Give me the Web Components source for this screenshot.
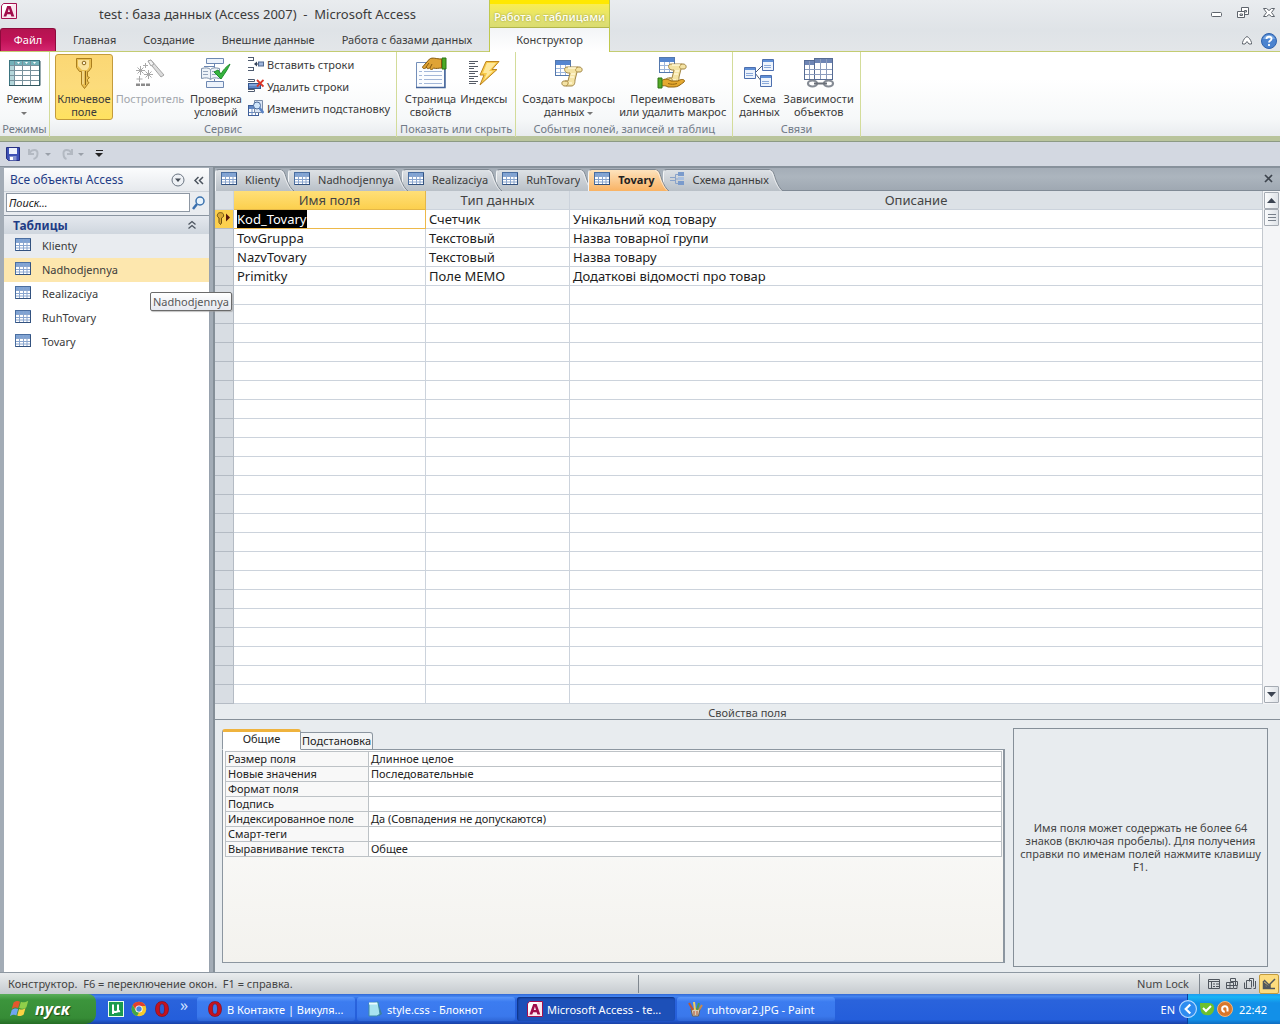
<!DOCTYPE html>
<html lang="ru">
<head>
<meta charset="utf-8">
<title>Microsoft Access</title>
<style>
html,body{margin:0;height:100%}
body{font:11px/13px "Noto Sans","Open Sans",sans-serif;color:#3b3b3b;overflow:hidden}
</style>
</head>
<body>
<access-app></access-app>
<script>
const grid16 = '<rect x=".5" y="1.5" width="15" height="12" fill="#fff" stroke="#4a6ea0"/><rect x="1" y="2" width="14" height="3" fill="#7fa3d4"/><path d="M1 5.5h14M1 8.5h14M1 11h14M4.5 2v11M8.5 2v11M12 2v11" stroke="#8aa6cf" fill="none"/><path d="M1 13.5h15M15.5 2v12" stroke="#33527f" fill="none"/>';
const scroll = '<path d="M14 10h12c4 0 4 5 1 5h-3l-2 8c0 4-1 6-4 6h-6c-4 0-4-5-1-5h4l2-8c-6 1-7-6-3-6z" fill="#f4e3a4" stroke="#a18544"/><path d="M24 15c-2-1-2-4 1-5M12 24c4-1 4 4 1 5" fill="none" stroke="#b3934a"/><path d="M15 11h8M18 17h4M17 20h4M16 26h3" stroke="#fff7d4" stroke-width="1.5" fill="none"/>';
const hand = '<path d="M4 24c4-3 7-2 10 0h7c4-3 8-1 6 1-4 3-6 5-10 5h-6c-3-2-4-1-7-1z" fill="#e5a930" stroke="#92640f"/><path d="M11 26.500c3 1 6 1 9 0" stroke="#92640f" fill="none"/><path d="M1 21h4v10H1z" fill="#56ab26" stroke="#2d7414"/>';
const box = (x,y,w=11,h=11)=>`<path d="M${x+.5} ${y+.5}h${w}v${h}h-${w}z" fill="#eef4fc" stroke="#4d6fae"/><path d="M${x+1} ${y+1}h${w-1}v2h-${w-1}z" fill="#5f8fd6"/><path d="M${x+2} ${y+6.5}h${w-4}M${x+2} ${y+8.5}h${w-4}" stroke="#8aa9da"/>`;
const ICONS = {
 access:[16,'<path d="M2.5.5h13v15H.5V3z" fill="#fbe6ef" stroke="#a3104f"/><path d="M1 12V3l2-2h9z" fill="#fff"/><path d="M2.500 13.500h2.800l.8-2.300h3.500l.8 2.300h2.900L9.600 3H6.200zM6.800 8.900 7.900 5.500 9 8.900z" fill="#a10d4b"/>'],
 table:[16,grid16],
 view:[32,'<rect x=".5" y="3.500" width="30" height="25" fill="#fff" stroke="#3b7480"/><rect x="1" y="4" width="29" height="4" fill="#72b1b9"/><rect x="1" y="8" width="4" height="20" fill="#b4d6da"/><path d="M1 8.500h29M1 13.500h29M1 18.500h29M1 23.500h29M5.500 4v24M13.500 4v24M21.500 4v24" stroke="#77919c" fill="none"/><path d="M8 5h3l-1.500 2zM16 5h3l-1.500 2zM24 5h3l-1.500 2z" fill="#fff"/><path d="M0 28.500h31V4" stroke="#32575f" fill="none"/>'],
 key:[32,'<path d="M8.500 1.500h15v9l-3 4h-1v5l2 1-2 2v2l1.500 1-1.500 2-3 4-3-4v-13h-2l-3-4z" fill="#e9bf52" stroke="#a97d1e"/><path d="M10 3h11v7l-2 3h-5l-4-4z" fill="#f9e19a"/><circle cx="16" cy="6" r="1.800" fill="#fff6d8" stroke="#8a651b"/><path d="M17.500 14v14" stroke="#8d681d"/><path d="M15 14v13" stroke="#fdedb4"/>'],
 builder:[32,'<path d="m14 4 3-1 13 15-3 2z" fill="#dcdcdc" stroke="#a5a5a5"/><path d="m14 4 3-1 3 4-3 2z" fill="#f2f2f2" stroke="#a5a5a5"/><g stroke="#a9a9a9"><path d="M6.500 9v9M2 13.500h9M3.500 10.500l6 6M9.500 10.500l-6 6M14.500 13v9M10 17.500h9M11.500 14.500l6 6M17.500 14.500l-6 6M5.500 19v6M2.500 22h6M11.500 6v5M9 8.500h5"/></g><path d="M2 26.500h4v2.500H2zM7 26.500h4v2.500H7zM12 26.500h4v2.500h-4z" fill="#8b8b8b"/>'],
 check:[32,'<path d="M6.500 1.500h17v5h-17zM6.500 24.500h17v6h-17z" fill="#edf3fb" stroke="#6d88b2"/><path d="M14.500 7v4M14.500 22v3M14 9.500H4" stroke="#6d88b2" fill="none"/><path d="M1.500 11.500c4-1 7-1 9 1 2-2 5-2 9-1v10c-4-1-7-1-9 1-2-2-5-2-9-1z" fill="#eef3f8" stroke="#7b8fa9"/><path d="M10.500 13v9M3 14.500h5M3 17.500h5M12 14.500h5M12 17.500h5" stroke="#94a5bc"/><path d="m14 15 4-2 3 4c2-4 5-7 9-10-2 5-5 9-9 15z" fill="#35b43e" stroke="#1e8c2a"/>'],
 insrow:[16,'<path d="M0 1.500h6M0 4.500h6M5.500 1v4M0 11.500h6M0 14.500h6M5.500 11v4" stroke="#4f5b70" fill="none"/><path d="m6 8 3-2.500v5z" fill="#35425a"/><path d="M8 8h3" stroke="#35425a"/><rect x="10.500" y="6" width="5" height="4" fill="#9fb5db" stroke="#51698f"/>'],
 delrow:[16,'<path d="M0 1.500h6.500v2H0M0 13.500h6.500v-2H0" stroke="#4f5b70" fill="#fff"/><rect x=".5" y="5.500" width="12" height="5" fill="#5b83c4" stroke="#35568d"/><path d="M1 7h11" stroke="#a5c2ec"/><path d="m9 2 6.500 6.500M15.500 2 9 8.500" stroke="#dc3425" stroke-width="1.800"/>'],
 lookup:[16,'<rect x=".5" y="5.500" width="10" height="10" fill="#fff" stroke="#3f5f99"/><path d="M1 6h9v3H1z" fill="#5f86c5"/><path d="M1 12.500h9M4 6v9M7.500 6v9" stroke="#6b8cc0"/><path d="M6.500.5h8v12h-8z" fill="#d9e5f5" stroke="#7a8ca8"/><circle cx="9" cy="5.500" r="3.500" fill="#cfe5fb" stroke="#4d6d9b"/><path d="m11.500 8 4 5" stroke="#5b83c4" stroke-width="2.500"/>'],
 props:[32,'<path d="M1.500 5.500h28v25h-28z" fill="#fbfdff" stroke="#748fb9"/><path d="M1 30.500h29V9" fill="none" stroke="#45669b" stroke-width="1.500"/><path d="M4 14.500h3M9 14.500h18M4 18.500h3M9 18.500h18M4 22.500h3M9 22.500h18M4 26.500h3M9 26.500h18" stroke="#a3b7d8"/><path d="M27 1h4v11h-4z" fill="#4caa25" stroke="#287214"/><path d="M26.500 2c-5 0-9-2-12 0l-7 8c0 2 3 2 4 0 0 2 2 2 3 1 1 2 3 2 4 0 3 1 5 0 8 0z" fill="#dfa335" stroke="#855a0e"/><path d="m11 10 3-4M15 11l2-4" stroke="#855a0e"/>'],
 index:[32,'<path d="M1 4.500h9M1 6.500h6M1 9.500h9M1 11.500h5M1 14.500h9M1 16.500h6M1 19.500h9M1 21.500h5M1 24.500h9M1 26.500h7" stroke="#555b66"/><path d="M18 4.500h13l-7 8h5L12 28l4-10h-4z" fill="#f7ca49" stroke="#be8520"/><path d="M19 6h9l-7 8h4l-9 9 3-7h-4z" fill="#ffe89b"/>'],
 macro:[32,'<g transform="translate(2 2)"><rect x=".5" y="1.500" width="15" height="15" fill="#fff" stroke="#5478ad"/><path d="M1 2h14v4H1z" fill="#5586d0"/><path d="M1 9.500h14M1 13.500h14M5.500 6v10M10.500 6v10" stroke="#9db6db"/></g>'+scroll],
 rename:[32,'<g transform="translate(0 -2)"><rect x="2.500" y="2.500" width="15" height="15" fill="#fff" stroke="#5478ad"/><path d="M3 3h14v4H3z" fill="#5586d0"/><path d="M3 10.500h14M3 14.500h14M7.500 7v10M12.500 7v10" stroke="#9db6db"/></g><g transform="translate(0 -3)">'+scroll+'</g>'+hand],
 schema:[32,'<path d="M12 16 20 8M12 16l7 9" stroke="#4e5c73" fill="none"/>'+box(1,10)+box(19,2)+box(17,18)],
 depend:[32,'<rect x="1.500" y="3.500" width="14" height="19" fill="#fff" stroke="#566b94"/><path d="M2 4h13v4H2z" fill="#6e85b4"/><rect x="11.500" y="1.500" width="18" height="21" fill="#fff" stroke="#566b94"/><path d="M12 2h17v4H12z" fill="#6e85b4"/><path d="M2 12.500h27M2 17.500h27M6.500 4v18M17.500 2v20M23.500 2v20" stroke="#8c9cbc" fill="none"/><g fill="none" stroke="#858b94" stroke-width="2.200"><ellipse cx="9.500" cy="26.500" rx="4.500" ry="3"/><ellipse cx="25.500" cy="26.500" rx="4.500" ry="3"/></g><path d="M11 26.500h13" stroke="#6b7079" stroke-width="2"/>'],
 save:[16,'<path d="M1.500 1.500h13v13h-11l-2-2z" fill="#3d51b5" stroke="#252f83"/><path d="M4 2h8v6H4z" fill="#eef3fc"/><path d="M4.500 10h7v4.500h-7z" fill="#8593d0"/><path d="M5 11h3v3H5z" fill="#fff"/>'],
 undo:[16,'<path d="M3 3v5h5M3.500 7C6 3 12 3 11.500 7.500c0 3-2 5-4 5.500" fill="none" stroke="#b3b9c2" stroke-width="2"/>'],
 redo:[16,'<path d="M13 3v5H8M12.500 7C10 3 4 3 4.500 7.500c0 3 1 5 3 5.500" fill="none" stroke="#b3b9c2" stroke-width="2"/>'],
 search:[16,'<path d="m6 9-4 5" stroke="#3a6fae" stroke-width="2.500"/><circle cx="9" cy="6" r="4" fill="#e8f3fc" stroke="#3b72ae" stroke-width="1.500"/>'],
 rel:[16,'<path d="M1 6.500h5M1 9.500h5M9 3.500H6.500v9H9M6 8h4" stroke="#89a3ca" fill="none"/><rect x="9" y="1" width="6" height="4" fill="#7a9bcc"/><rect x="9" y="6" width="6" height="3" fill="#a9c0e0"/><rect x="9" y="10" width="6" height="4" fill="#7a9bcc"/>'],
 rowkey:[16,'<path d="M2.500 3.500C3 1 8 1 8.500 3.500 9 6 8 6 6.500 7v5l-1 1.500-1.500-2V7C2.500 6 2 5 2.500 3.500z" fill="#d9a834" stroke="#6e4f0e"/><path d="M11 2.500v8l4-4z" fill="#55150c"/>'],
 min:[16,'<rect x="2.500" y="7.500" width="10" height="4" rx="1" fill="#fff" stroke="#5e646c"/>'],
 restore:[16,'<path d="M6.500 2.500h7v7h-7z" fill="#fff" stroke="#5e646c"/><path d="M9.500 5.500h2v1.500h-2z" fill="none" stroke="#5e646c"/><path d="M2.500 6.500h7v6h-7z" fill="#fff" stroke="#5e646c"/><path d="M5 9h2.500v1.500H5z" fill="#fff" stroke="#5e646c"/>'],
 close:[16,'<path d="M2.500 3.500h3L8 5.500l2.500-2h3l-3 4 3 4h-3L8 9.500l-2.500 2h-3l3-4z" fill="#fff" stroke="#5e646c"/>'],
 up:[16,'<path d="M3.500 9.500c1-3 2.500-5 4.500-6 2 1 3.500 3 4.500 6v1.500h-2.500L8 8.500 6 11H3.500z" fill="#fff" stroke="#5e646c"/>'],
 help:[16,'<circle cx="8" cy="8" r="7.500" fill="#4b83cf" stroke="#2f62ad"/><path d="M2 6a6.500 6.500 0 0 1 12 0z" fill="#7aa8e2"/><path d="M5.500 6C5.500 3 11 3 10.500 6c0 1.500-2.500 1.500-2.500 3.500M8 11v2" stroke="#fff" stroke-width="1.800" fill="none"/>'],
 circle:[16,'<circle cx="8" cy="8" r="6" fill="#eef1f5" stroke="#6c7683"/><path d="M5 6.500h6L8 10z" fill="#444b55"/>'],
 left2:[16,'<path d="M7.500 5 4 8.500 7.500 12M12 5 8.500 8.500 12 12" fill="none" stroke="#4c545f" stroke-width="1.500"/>'],
 up2:[16,'<path d="M4.500 7.500 8 4.500l3.500 3M4.500 11.500 8 8.500l3.500 3" fill="none" stroke="#4c545f" stroke-width="1.300"/>'],
 v1:[16,'<path d="M2.500 3.500h11v9h-11zM2.500 5.500h11M5.500 6v6M7 8h2M10 8h3M7 10.500h2M10 10.500h3" stroke="#50565e" fill="none"/>'],
 v2:[16,'<path d="M6.500 2.500h5v7M6.500 2.500v3M6.500 5.500h7v4h-4M2.500 6.500h7v6h-7zM2.500 9.500h7M6 6.500v6M10 12.500h3v-3" stroke="#50565e" fill="none"/>'],
 v3:[16,'<path d="M7.500 2.500h4v8M7.500 2.500v3M4.500 4.500h5v7M2.500 6.500v6h7M4.500 4.500v8M11.500 12.500h2V5" stroke="#50565e" fill="none"/>'],
 v4:[16,'<path d="m3 4 6 6V8l5-5M2.500 5v7.500H14M4 8v3h4z" stroke="#50565e" fill="none" stroke-width="1.500"/>'],
 win:[24,'<path d="M5 5c3-2 5-2 7-1l-2 7c-2-1-4-1-7 1z" fill="#e4572e"/><path d="M13 4c2 1 4 1 8-1l-2 7c-3 2-5 2-8 1z" fill="#8fd04a"/><path d="M3 13c3-2 5-2 7-1l-2 7c-2-1-4-1-7 1z" fill="#6fa5f0"/><path d="M11 12c2 1 4 1 7-1l-2 7c-3 2-5 2-7 1z" fill="#fbd244"/>'],
 ut:[16,'<rect x=".5" y=".5" width="15" height="15" fill="#1b9b4f" stroke="#eafff0"/><path d="M5 3.500V13M5 9c0 2.500 5 2.500 5 0V3.500M10 8c0 2 .5 2.500 2 2" stroke="#fff" stroke-width="2" fill="none"/>'],
 chrome:[16,'<circle cx="8" cy="8" r="7.300" fill="#f5c92e"/><path d="M8 .7A7.300 7.300 0 0 1 14.500 5H8L4.500 8.500 1.700 4A7.300 7.300 0 0 1 8 .7z" fill="#e0402f"/><path d="M1.700 4 5 10l3 1.500-2 3.500A7.300 7.300 0 0 1 1.700 4z" fill="#42a648"/><circle cx="8" cy="8" r="3.600" fill="#fff"/><circle cx="8" cy="8" r="2.700" fill="#4b86dc"/>'],
 opera:[16,'<path fill-rule="evenodd" d="M8 .5c4.500 0 6.500 3.500 6.500 7.500S12.500 15.500 8 15.500 1.500 12 1.500 8 3.500.5 8 .5zm0 2.300C6 2.800 5.500 5.500 5.500 8S6 13.200 8 13.200s2.500-2.700 2.500-5.200S10 2.800 8 2.800z" fill="#c4121f" stroke="#7f0a14" stroke-width=".6"/>'],
 note:[16,'<path d="m3 1 8 1 4 11-3 2z" fill="#3d7f9b"/><path d="m2 2 9-1 2 12-3 2H2z" fill="#a8e3f0" stroke="#3c8aa6"/><path d="M2 2.500h8" stroke="#e9fbff" stroke-width="2"/>'],
 paint:[16,'<path d="M4 8h9l-1.500 7h-6z" fill="#d8cdb8" stroke="#6e604a"/><path d="M6 9 2 2" stroke="#c2572f" stroke-width="2"/><path d="M8 9 7 1" stroke="#f0d060" stroke-width="2"/><path d="m10 9 2-7" stroke="#4c9c4c" stroke-width="2"/><path d="m12 9 3-5" stroke="#c98b4d" stroke-width="2"/><path d="M7 10v4M10 10v4" stroke="#b04e2e"/>'],
 t1:[16,'<circle cx="8" cy="8" r="7.500" fill="#2d8cf0" stroke="#b9dcff"/><path d="M10 4 6 8l4 4" stroke="#fff" stroke-width="2" fill="none"/>'],
 t2:[16,'<path d="M1 2h9c4 0 6 3 5 7s-4 6-8 5C2 14 1 9 1 2z" fill="#6dc02e"/><path d="m4 7 3 3 5-5" stroke="#fff" stroke-width="2" fill="none"/>'],
 t3:[16,'<circle cx="8" cy="8" r="7.500" fill="#d9772b" stroke="#f4b67a"/><path d="M10.500 10.500v-3a2.700 2.700 0 1 0-2.700 3.200" stroke="#fff" stroke-width="2" fill="none"/>']
};
const RESET = `<style>*{box-sizing:border-box}:host{display:block;box-sizing:border-box}
button{font:inherit;color:inherit;background:none;border:0;padding:0;margin:0;text-align:inherit;white-space:nowrap}</style>`;
function define(name, html, setup){
  const t = document.createElement('template');
  t.innerHTML = RESET + html;
  customElements.define(name, class extends HTMLElement{
    constructor(){super();this.attachShadow({mode:'open'}).append(t.content.cloneNode(true))}
    connectedCallback(){if(setup&&!this.ready){this.ready=true;setup(this,this.shadowRoot)}}
  });
}
function prependIcon(el, root, fallback){
  const i=document.createElement('ac-icon');
  i.setAttribute('name',el.getAttribute('icon')||fallback);
  root.querySelector('button').prepend(i);
}

define('ac-icon','<style>:host{display:inline-block;flex:none;line-height:0}svg{display:block}</style>',(el,r)=>{
  const [s,body]=ICONS[el.getAttribute('name')], size=el.getAttribute('size')||s;
  r.innerHTML+=`<svg width="${size}" height="${size}" viewBox="0 0 ${s} ${s}" aria-hidden="true">${body}</svg>`;
});

define('title-bar',`<style>
:host{display:flex;height:52px;background:linear-gradient(#e9ecef,#dfe3e7 60%,#e3e6e9);border-bottom:1px solid #c3cc72}
.left{display:flex;flex-direction:column}
.title{display:flex;height:28px;padding:3px 0 3px 1px;font-size:13px;line-height:23px;white-space:pre}
.title span{padding-left:82px}
nav{display:flex;height:23px}
nav button{padding:0 14px 0 13px}
nav .file{background:linear-gradient(#b3144f,#c01257 50%,#d5266f);color:#fff;border:1px solid #8d0b3c;border-bottom:0;border-radius:3px 3px 0 0;width:56px;text-align:center;padding:0 0 2px;margin-right:4px}
.ctx{width:121px;margin-left:3px;height:52px;border:solid #bfc84d;border-width:0 1px;background:linear-gradient(#fff04a,#dfe072 40%,#c9cc66)}
.ctx b{display:block;height:28px;line-height:26px;text-align:center;font-weight:600;color:#fffef0;text-shadow:0 0 2px #8b8d28;border-top:4px solid #ffe800;border-bottom:1px solid #b1b64c;white-space:nowrap}
.ctx button{display:block;width:100%;height:24px;padding-bottom:2px;background:linear-gradient(#f3f5f7,#fff);text-align:center}
.right{margin-left:auto;display:flex;flex-direction:column;padding:5px 3px 0 0;gap:10px}
.right div{display:flex;justify-content:flex-end;gap:10px}
.right .h{gap:6px}
</style>
<div class="left"><div class="title"><ac-icon name="access"></ac-icon><span>test : база данных (Access 2007)  -  Microsoft Access</span></div>
<nav><button class="file">Файл</button><button>Главная</button><button>Создание</button><button>Внешние данные</button><button>Работа с базами данных</button></nav></div>
<div class="ctx"><b>Работа с таблицами</b><button>Конструктор</button></div>
<div class="right"><div><button aria-label="Свернуть"><ac-icon name="min"></ac-icon></button><button aria-label="Восстановить"><ac-icon name="restore"></ac-icon></button><button aria-label="Закрыть"><ac-icon name="close"></ac-icon></button></div>
<div class="h"><button aria-label="Свернуть ленту"><ac-icon name="up"></ac-icon></button><button aria-label="Справка"><ac-icon name="help"></ac-icon></button></div></div>`);

define('ribbon-group',`<style>
:host{display:flex;flex-direction:column;border-right:1px solid #d3dc9a;height:85px;flex:none}
.b{display:flex;height:68px;padding:2px 5px 0;gap:2px;justify-content:center}
.l{text-align:center;color:#717a87;line-height:17px;white-space:nowrap;padding:0 3px}
:host([tight]) .l{padding:0}
</style><div class="b"><slot></slot></div><div class="l"></div>`,(el,r)=>{r.querySelector('.l').textContent=el.getAttribute('label')});

define('ribbon-button',`<style>
:host{height:66px}
button{width:100%;height:66px;border:1px solid transparent;border-radius:3px;display:flex;flex-direction:column;align-items:center;padding:2px 0 0;gap:3px;text-align:center}
span{white-space:pre}
:host([on]) button{background:linear-gradient(#fbd774,#fcdc7c 50%,#ffe25f);border-color:#c39b3c}
:host([off]){color:#a3a7ac}
</style><button><span><slot></slot></span></button>`,(el,r)=>{
  prependIcon(el,r);
  if(el.hasAttribute('off'))r.querySelector('button').disabled=true;
});

define('ribbon-line',`<style>:host{height:22px}button{display:flex;align-items:center;gap:3px;height:22px;padding-bottom:2px}</style>
<button><slot></slot></button>`,prependIcon);

define('ribbon-bar',`<style>
:host{display:flex;height:90px;background:linear-gradient(#fff 30%,#f6f8f9 75%,#e9ecef 94%,transparent 94%),#b9c49c;border-bottom:1px solid #8c9a84}
.lines{display:flex;flex-direction:column;padding:0 1px}
.w48{width:48px}.w58{width:58px}.w70{width:70px}
small{display:inline-block;border:solid transparent;border-width:3px 3px 0;border-top-color:#777;vertical-align:middle;height:0}
</style>
<ribbon-group tight label="Режимы" style="width:50px"><ribbon-button icon="view" class="w48">Режим
<small></small></ribbon-button></ribbon-group>
<ribbon-group label="Сервис"><ribbon-button icon="key" on class="w58">Ключевое
поле</ribbon-button><ribbon-button icon="builder" off class="w70">Построитель</ribbon-button><ribbon-button icon="check" class="w58">Проверка
условий</ribbon-button>
<div class="lines"><ribbon-line icon="insrow">Вставить строки</ribbon-line><ribbon-line icon="delrow">Удалить строки</ribbon-line><ribbon-line icon="lookup">Изменить подстановку</ribbon-line></div></ribbon-group>
<ribbon-group label="Показать или скрыть"><ribbon-button icon="props">Страница
свойств</ribbon-button><ribbon-button icon="index">Индексы</ribbon-button></ribbon-group>
<ribbon-group label="События полей, записей и таблиц"><ribbon-button icon="macro">Создать макросы
данных <small></small></ribbon-button><ribbon-button icon="rename">Переименовать
или удалить макрос</ribbon-button></ribbon-group>
<ribbon-group label="Связи"><ribbon-button icon="schema">Схема
данных</ribbon-button><ribbon-button icon="depend">Зависимости
объектов</ribbon-button></ribbon-group>`);

define('quick-access',`<style>
:host{display:flex;align-items:center;height:24px;padding:0 5px;gap:5px;background:#d3d8e1}
i{border:solid transparent;border-width:3px 3px 0;border-top-color:#9aa0a9;margin:0 3px 0 -2px}
.m{width:14px;height:8px;display:flex;flex-direction:column;align-items:center;gap:2px}
.m:before{content:"";width:7px;height:1px;background:#222}
.m:after{content:"";border:solid transparent;border-width:4px 4px 0;border-top-color:#222}
button{display:flex}
</style><button aria-label="Сохранить"><ac-icon name="save"></ac-icon></button><button aria-label="Отменить"><ac-icon name="undo"></ac-icon></button><i></i><button aria-label="Вернуть"><ac-icon name="redo"></ac-icon></button><i></i><button class="m" aria-label="Настройка"></button>`);

define('nav-item',`<style>
button{display:flex;align-items:center;gap:11px;width:100%;height:24px;padding:0 0 2px 11px}
:host([dim]){background:#e9ecf0}
:host([hot]){background:#fde7ae}
</style><button><ac-icon name="table"></ac-icon><slot></slot></button>`);

define('nav-pane',`<style>
:host{display:flex;flex-direction:column;background:#fff;border-right:1px solid #98a2ae;position:relative;margin:1px 0 0 4px}
header{display:flex;align-items:center;height:24px;padding:0 2px 0 6px;background:linear-gradient(#fbfcfd,#e6e9ed);color:#1f3c86;font-size:12px;gap:5px;border-bottom:1px solid #ccd2d9}
header span{flex:1}
header button,.s button,h2 button{display:flex}
.s{display:flex;align-items:center;height:24px;background:#e9ecf0;padding:0 2px 2px;gap:1px;border-bottom:1px solid #8b95a1}
input{flex:1;min-width:0;height:19px;border:1px solid #8d97a3;font:italic 11px "Noto Sans",sans-serif;padding:0 2px;margin:0;color:#222;border-radius:0}
input::placeholder{color:#222;opacity:1}
h2{display:flex;align-items:center;justify-content:space-between;margin:0;height:18px;padding:0 9px;font-size:12px;color:#1f3c86;background:linear-gradient(#e4e8ee,#cfd6de)}
.tip{position:absolute;left:146px;top:124px;border:1px solid #6b6b6b;border-radius:2px;background:linear-gradient(#fff,#e6e9f0);padding:2px;line-height:13px;z-index:99;white-space:nowrap;color:#575757;box-shadow:1px 1px 1px #9999}
</style>
<header><span>Все объекты Access</span><button aria-label="Меню"><ac-icon name="circle"></ac-icon></button><button aria-label="Скрыть область"><ac-icon name="left2"></ac-icon></button></header>
<div class="s"><input placeholder="Поиск..." aria-label="Поиск"><button aria-label="Найти"><ac-icon name="search"></ac-icon></button></div>
<h2>Таблицы<button aria-label="Свернуть"><ac-icon name="up2"></ac-icon></button></h2>
<nav-item dim>Klienty</nav-item><nav-item hot>Nadhodjennya</nav-item><nav-item>Realizaciya</nav-item><nav-item>RuhTovary</nav-item><nav-item>Tovary</nav-item>
<div class="tip" role="tooltip">Nadhodjennya</div>`);

define('doc-tab',`<style>
:host{display:flex;height:22px;margin-right:-6px;flex:none}
button{display:flex;align-items:center;gap:8px;height:22px;padding:0 0 3px 5px;background:linear-gradient(#dde1e5,#b9c0c7);border-top:1px solid #808993;border-left:1px solid #f3f5f7;border-radius:4px 0 0 0}
svg{display:block}
:host([on]){color:#222;font-weight:bold}
:host([on]) button{background:linear-gradient(#fde3bd,#f9b263)}
</style><button><slot></slot></button>`,(el,r)=>{
  prependIcon(el,r,'table');
  const on=el.hasAttribute('on');
  r.querySelector('button').insertAdjacentHTML('afterend',`<svg width="14" height="22"><defs><linearGradient id="g" x2="0" y2="1"><stop stop-color="${on?'#fde3bd':'#dde1e5'}"/><stop offset="1" stop-color="${on?'#f9b263':'#b9c0c7'}"/></linearGradient></defs><path d="M0 0c5 1 5 6 7 11 2 5 4 9 7 11H0z" fill="url(#g)"/><path d="M0 .5c5 .5 5 5.500 7 10.500 2 5 4 9 7 11" fill="none" stroke="#808993"/><path d="M0 1.500c4 1 4 5 6 10 2 5 4 8 6 10" fill="none" stroke="#fff9"/></svg>`);
});

define('doc-tabs',`<style>
:host{display:flex;height:24px;background:linear-gradient(#a4adb7,#acb5be 40%,#9fa8b2);border-top:1px solid #87919b;border-bottom:1px solid #808a95;padding-top:1px}
.x{margin-left:auto;padding:0 7px 2px 0;display:flex;align-items:center}
</style><doc-tab style="z-index:6">Klienty</doc-tab><doc-tab style="z-index:5">Nadhodjennya</doc-tab><doc-tab style="z-index:4">Realizaciya</doc-tab><doc-tab style="z-index:3">RuhTovary</doc-tab><doc-tab on style="z-index:7">Tovary</doc-tab><doc-tab icon="rel" style="z-index:1">Схема данных</doc-tab>
<button class="x" aria-label="Закрыть"><svg width="9" height="9"><path d="m1 1 7 7M8 1 1 8" stroke="#3d444d" stroke-width="1.700"/></svg></button>`);

define('scroll-bar',`<style>
:host{display:flex;flex-direction:column;width:18px;background:#f4f5f7;border-left:1px solid #c3c8ce;padding:1px}
button{height:17px;width:15px;border:1px solid #a5abb3;border-radius:1px;background:linear-gradient(90deg,#fafbfc,#dfe3e8);display:flex;align-items:center;justify-content:center}
.d{margin-top:auto}
</style><button aria-label="Вверх"><svg width="9" height="5"><path d="M0 5 4.500 0 9 5z" fill="#3c4452"/></svg></button><button aria-label="Ползунок"><svg width="8" height="8"><path d="M0 .5h8M0 3.500h8M0 6.500h8" stroke="#777f8a"/></svg></button><button class="d" aria-label="Вниз"><svg width="9" height="5"><path d="M0 0h9L4.500 5z" fill="#3c4452"/></svg></button>`);

define('design-grid',`<style>
:host{display:flex;flex:1;min-height:0;overflow:hidden;background:#fff}
table{border-collapse:separate;border-spacing:0;table-layout:fixed;flex:1;width:0;height:min-content;font-size:13px;line-height:16px;color:#1c1c1c}
th,td{height:19px;padding:0 3px;border:solid #ccd3dc;border-width:0 1px 1px 0;text-align:left;font-weight:normal;white-space:nowrap;overflow:hidden}
th{background:#dce1e6;text-align:center;color:#444}
th.n{background:linear-gradient(#ffdf78,#fcd04e);border-color:#e4b748}
td:first-child{background:#d8dde3;border-color:#b4bbc4;padding:0}
td:last-child,th:last-child{border-right:0}
tr.cur td:first-child{background:#fcd04e}
tr.cur td:nth-child(2){border-color:#edb94a}
mark{background:#000;color:#fff}
ac-icon{display:block}
</style><table><colgroup><col style="width:19px"><col style="width:192px"><col style="width:144px"><col></colgroup><thead><tr><th></th><th class="n">Имя поля</th><th>Тип данных</th><th>Описание</th></tr></thead><tbody></tbody></table><scroll-bar></scroll-bar>`,(el,r)=>{
  const rows=[['<mark>Kod_Tovary</mark>','Счетчик','Унікальний код товару'],['TovGruppa','Текстовый','Назва товарної групи'],['NazvTovary','Текстовый','Назва товару'],['Primitky','Поле МЕМО','Додаткові відомості про товар']];
  let h='';
  for(let i=0;i<26;i++){const c=rows[i]||['','',''];h+=`<tr${i?'':' class="cur"'}><td>${i?'':'<ac-icon name="rowkey"></ac-icon>'}</td>${c.map(x=>`<td>${x}</td>`).join('')}</tr>`}
  r.querySelector('tbody').innerHTML=h;
});

define('field-properties',`<style>
:host{background:#e8ecef;height:268px;flex:none;display:flex;flex-direction:column;color:#222}
.cap{height:16px;line-height:17px;text-align:center;border-bottom:1px solid #858f98;color:#444}
.row{flex:1;display:flex;gap:8px;padding:8px 12px 5px 7px}
.left{flex:1;display:flex;flex-direction:column;padding-bottom:4px}
.tabs{display:flex;align-items:flex-end;height:22px;margin-bottom:-1px;z-index:1}
.tabs button{border:1px solid #8c96a0;height:18px;border-left:0;text-align:center;border-radius:0 3px 0 0;padding:0 1px 2px;background:#f3f5f6;color:#222}
.tabs .on{width:79px;height:21px;border-left:1px solid #8c96a0;border-top:3px solid #efb33e;background:#fff;border-radius:3px 3px 0 0;border-bottom-color:#fff;padding-bottom:4px}
.box{flex:1;border:1px solid #8c96a0;border-right-width:2px;background:linear-gradient(#fdfdfd,#f3f2ee);padding:1px 1px 0 2px}
table{border-collapse:collapse;width:100%;table-layout:fixed;line-height:14px}
td,th{height:15px;border:1px solid #bdc2c6;padding:0 2px;white-space:nowrap;text-align:left;font-weight:normal}
th{background:#f8f8f8;width:143px}td{background:#fff}
.help{width:255px;border:1px solid #858f98;display:flex;align-items:center;text-align:center;padding:0 4px 2px;color:#444}
</style><div class="cap">Свойства поля</div><div class="row"><div class="left"><div class="tabs"><button class="on">Общие</button><button>Подстановка</button></div><div class="box"><table>
<tr><th scope="row">Размер поля</th><td>Длинное целое</td></tr><tr><th scope="row">Новые значения</th><td>Последовательные</td></tr><tr><th scope="row">Формат поля</th><td></td></tr><tr><th scope="row">Подпись</th><td></td></tr><tr><th scope="row">Индексированное поле</th><td>Да (Совпадения не допускаются)</td></tr><tr><th scope="row">Смарт-теги</th><td></td></tr><tr><th scope="row">Выравнивание текста</th><td>Общее</td></tr></table></div></div>
<div class="help">Имя поля может содержать не более 64 знаков (включая пробелы). Для получения справки по именам полей нажмите клавишу F1.</div></div>`);

define('status-bar',`<style>
:host{display:flex;align-items:center;height:22px;border-top:1px solid #8e98a2;background:linear-gradient(#e9ecee,#c6cbcf);padding:0 1px 0 8px;color:#444}
.m{flex:0 0 50%;white-space:pre;line-height:17px;height:18px;margin-right:-6px}
.c{flex:1;border-left:1px solid #7f878f;height:18px;text-align:right;padding-right:10px;line-height:17px}
.v{display:flex;border-left:1px solid #7f878f;padding-left:5px}
.v button{width:18px;height:20px;display:flex;align-items:center;justify-content:center}
.v .on{width:20px;background:#fddc7e;border:1px solid #c39b3c;border-radius:2px}
</style><div class="m">Конструктор.  F6 = переключение окон.  F1 = справка.</div><div class="c">Num Lock</div><div class="v"><button aria-label="Таблица"><ac-icon name="v1"></ac-icon></button><button aria-label="Сводная таблица"><ac-icon name="v2"></ac-icon></button><button aria-label="Сводная диаграмма"><ac-icon name="v3"></ac-icon></button><button class="on" aria-label="Конструктор"><ac-icon name="v4"></ac-icon></button></div>`);

define('task-button',`<style>
:host{width:160px;height:24px}
button{display:flex;align-items:center;gap:4px;width:158px;height:24px;padding-left:10px;border-radius:3px;color:#fff;background:linear-gradient(#5b97fa,#3c7cf0 20%,#3a78ec 80%,#2f67d6);overflow:hidden}
:host([on]) button{background:#1d50b8;box-shadow:inset 1px 1px 2px #0c2f80}
</style><button><slot></slot></button>`,prependIcon);

define('task-bar',`<style>
:host{display:flex;align-items:center;height:30px;background:linear-gradient(#3168d5,#4384f0 8%,#2a63dc 20%,#245edb 85%,#1941a5)}
.start{width:96px;height:30px;display:flex;align-items:center;gap:4px;padding-left:9px;font:italic bold 16px "Open Sans","Noto Sans",sans-serif;color:#fff;text-shadow:1px 1px 1px #1f4d1a;background:linear-gradient(#5aae5a,#3c953c 20%,#368c36 80%,#256c25);border-radius:0 8px 10px 0}
.q{display:flex;gap:7px;padding:0 7px 0 12px;color:#cfe2ff;width:101px}
.q button{display:flex}
.q span{font-size:16px;line-height:8px;padding-left:3px}
.tasks{display:flex;flex:1}
.lang{color:#fff;padding-right:12px}
.tray{display:flex;align-items:center;height:30px;width:93px;color:#fff;background:linear-gradient(#1f9bf0,#18b5f5 10%,#1290e8 30%,#1290e8 85%,#0f6cc0);border-left:1px solid #0b3f9b;gap:2px}
.tray ac-icon:first-child{margin-left:-9px}
.tray time{padding-left:4px}
</style><button class="start"><ac-icon name="win" size="22"></ac-icon>пуск</button><div class="q"><button aria-label="uTorrent"><ac-icon name="ut"></ac-icon></button><button aria-label="Chrome"><ac-icon name="chrome"></ac-icon></button><button aria-label="Opera"><ac-icon name="opera"></ac-icon></button><span>»</span></div>
<div class="tasks"><task-button icon="opera">В Контакте | Викуля...</task-button><task-button icon="note">style.css - Блокнот</task-button><task-button icon="access" on>Microsoft Access - te...</task-button><task-button icon="paint">ruhtovar2.JPG - Paint</task-button></div>
<span class="lang">EN</span><div class="tray"><ac-icon name="t1" size="18"></ac-icon><ac-icon name="t2"></ac-icon><ac-icon name="t3"></ac-icon><time>22:42</time></div>`);

define('access-app',`<style>
:host{display:flex;flex-direction:column;height:100vh}
.work{flex:1;display:flex;min-height:0;background:#a3acb6;border-top:1px solid #87919b}
nav-pane{flex:0 0 206px}
main{flex:1;min-width:0;display:flex;flex-direction:column;margin-left:3px;border-left:2px solid #858f98}
</style><title-bar></title-bar><ribbon-bar></ribbon-bar><quick-access></quick-access>
<div class="work"><nav-pane></nav-pane><main><doc-tabs></doc-tabs><design-grid></design-grid><field-properties></field-properties></main></div>
<status-bar></status-bar><task-bar></task-bar>`);
</script>
</body>
</html>
